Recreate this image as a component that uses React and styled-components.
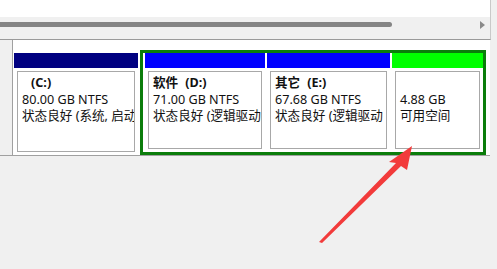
import React from "react";
import styled, { createGlobalStyle } from "styled-components";

const GlobalStyle = createGlobalStyle`
  html, body {
    margin: 0;
    padding: 0;
    background: #f0f0f0;
    width: 497px;
    height: 269px;
    overflow: hidden;
  }
  body {
    font-family: "Noto Sans", "Noto Sans CJK SC", sans-serif;
    font-size: 12.6px;
    color: #111;
  }
`;

const Page = styled.div`
  position: relative;
  width: 497px;
  height: 269px;
`;

const TopPanel = styled.div`
  width: 490px;
  border-right: 1px solid #c9c9c9;
  border-bottom: 1px solid #9a9a9a;
  display: flex;
  flex-direction: column;
`;

const WhiteStrip = styled.div`
  height: 17px;
  background: #fff;
`;

const ScrollTrack = styled.div`
  height: 22px;
  background: #f0f0f0;
  display: flex;
  align-items: flex-start;
  padding-top: 5px;
  box-sizing: border-box;
`;

const Thumb = styled.div`
  width: 392px;
  height: 5px;
  background: #858585;
  border-radius: 0 3px 3px 0;
`;

const ScrollArrow = styled.div`
  margin-left: 88px;
  margin-top: -1px;
  width: 0;
  height: 0;
  border-top: 4px solid transparent;
  border-bottom: 4px solid transparent;
  border-left: 5px solid #8a8a8a;
`;

const DiskSection = styled.div`
  display: flex;
  width: 490px;
  border-bottom: 1px solid #a0a0a0;
`;

const Gutter = styled.div`
  width: 12px;
  background: #f0f0f0;
  border-right: 1px solid #a0a0a0;
`;

const DiskRow = styled.div`
  flex: 1;
  height: 115px;
  box-sizing: border-box;
  background: #fff;
  padding: 10px 0 0 1px;
  display: flex;
  align-items: stretch;
`;

const Partition = styled.div`
  width: ${(p) => p.$w}px;
  margin-top: ${(p) => p.$top || 0}px;
  display: flex;
  flex-direction: column;
  flex-shrink: 0;
`;

const Bar = styled.div`
  height: 15px;
  background: ${(p) => p.$color};
`;

const Box = styled.div`
  flex: 1;
  margin: 3px;
  border: 1px solid #a8a8a8;
  padding: 3px 0 0 4px;
  overflow: hidden;
  white-space: nowrap;
  line-height: 16.5px;
`;

const Title = styled.div`
  font-weight: bold;
  height: 16.5px;
`;

const Letter = styled.span`
  margin-left: ${(p) => p.$indent}px;
`;

const Extended = styled.div`
  margin-left: 2px;
  width: 346px;
  box-sizing: border-box;
  border: 3px solid #0b7d0b;
  padding-left: 2px;
  display: flex;
  gap: 2px;
`;

const Arrow = styled.svg`
  position: absolute;
  left: 0;
  top: 0;
  pointer-events: none;
`;

function Volume({ width, color, name, letter, size, status, top }) {
  return (
    <Partition $w={width} $top={top}>
      <Bar $color={color} />
      <Box>
        <Title>
          {name}
          {letter && <Letter $indent={name ? 7 : 9}>({letter})</Letter>}
        </Title>
        <div>{size}</div>
        <div>{status}</div>
      </Box>
    </Partition>
  );
}

export default function App() {
  return (
    <Page>
      <GlobalStyle />
      <TopPanel>
        <WhiteStrip />
        <ScrollTrack>
          <Thumb />
          <ScrollArrow />
        </ScrollTrack>
      </TopPanel>
      <DiskSection>
        <Gutter />
        <DiskRow>
          <Volume
            width={124}
            top={3}
            color="#000080"
            name=""
            letter="C:"
            size="80.00 GB NTFS"
            status="状态良好 (系统, 启动"
          />
          <Extended>
            <Volume
              width={120}
              color="#0000ff"
              name="软件"
              letter="D:"
              size="71.00 GB NTFS"
              status="状态良好 (逻辑驱动"
            />
            <Volume
              width={123}
              color="#0000ff"
              name="其它"
              letter="E:"
              size="67.68 GB NTFS"
              status="状态良好 (逻辑驱动"
            />
            <Volume
              width={91}
              color="#00ff00"
              name=""
              letter=""
              size="4.88 GB"
              status="可用空间"
            />
          </Extended>
        </DiskRow>
      </DiskSection>
      <Arrow width="497" height="269" viewBox="0 0 497 269">
        <polygon
          points="412,146 389,162 396,163 319,242 322,243 401,166 407,170"
          fill="#f23b3b"
        />
      </Arrow>
    </Page>
  );
}
